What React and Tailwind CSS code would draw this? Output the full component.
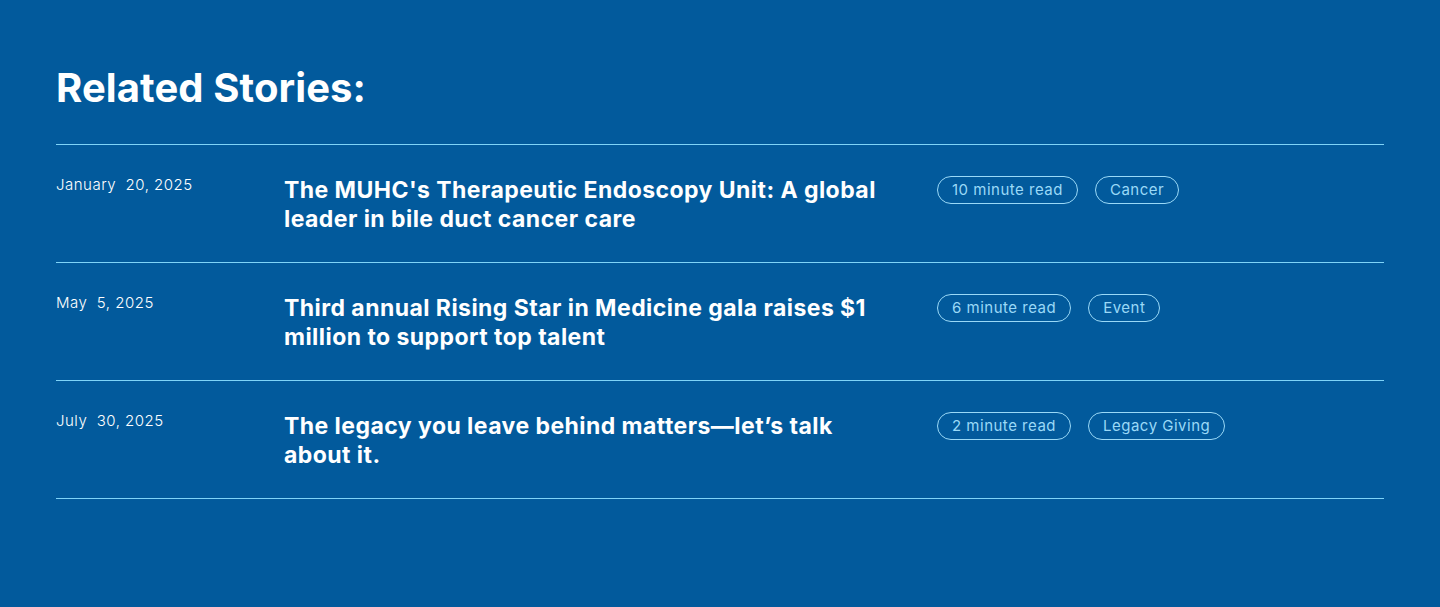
import React from 'react';

const stories = [
  {
    id: 1,
    date: 'January  20, 2025',
    title: "The MUHC's Therapeutic Endoscopy Unit: A global leader in bile duct cancer care",
    tags: ['10 minute read', 'Cancer']
  },
  {
    id: 2,
    date: 'May  5, 2025',
    title: 'Third annual Rising Star in Medicine gala raises $1 million to support top talent',
    tags: ['6 minute read', 'Event']
  },
  {
    id: 3,
    date: 'July  30, 2025',
    title: 'The legacy you leave behind matters\u2014let\u2019s talk about it.',
    tags: ['2 minute read', 'Legacy Giving']
  }
];

const App = () => {
  return (
    <section className="bg-[#025a9c] text-white min-h-[607px] font-['Inter',sans-serif] px-14 pt-[64px]">
      <h1 className="text-[40px] leading-[48px] font-bold tracking-[0.1px] pb-[32px] border-b border-[#7fd4f8]">
        Related Stories:
      </h1>
      {stories.map((story) => {
        return (
          <div key={story.id} className="flex border-b border-[#7fd4f8] pt-[31px] h-[118px]">
            <div className="w-[228px] shrink-0 text-[15px] leading-[18px] font-light tracking-[0.5px] whitespace-pre">{story.date}</div>
            <div className="w-[653px] shrink-0 pr-[40px]">
              <h2 className="text-[23px] leading-[29px] font-bold tracking-[0.45px]">{story.title}</h2>
            </div>
            <div className="flex gap-[17px] items-start">
              {story.tags.map((tag) => (
                <span
                  key={tag}
                  className="border border-[#9ad9f7] text-[#9ad9f7] rounded-full h-[28px] px-[14px] text-[15px] tracking-[0.5px] leading-[26px]"
                >
                  {tag}
                </span>
              ))}
            </div>
          </div>
        );
      })}
    </section>
  );
};

export default App;
